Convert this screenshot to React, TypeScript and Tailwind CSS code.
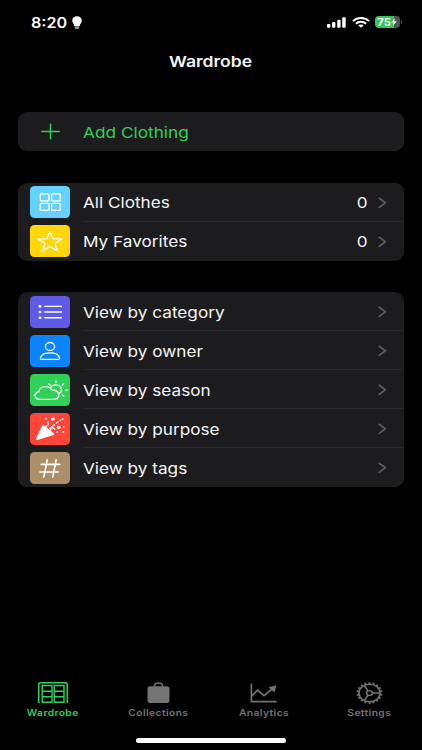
import type { ReactNode } from 'react'

interface RowProps {
  label: string
  tile: string
  icon: ReactNode
  count?: number
  last?: boolean
}

function Chevron() {
  return (
    <svg width="9" height="12" viewBox="0 0 9 12" fill="none" stroke="#5b5b5f" strokeWidth="1.7">
      <path d="M1.2 1.2 7.4 5.8 1.2 10.4" strokeLinecap="round" strokeLinejoin="round" />
    </svg>
  )
}

function Row({ label, tile, icon, count, last }: RowProps) {
  return (
    <div className="flex h-[39.05px] items-center pl-[12.5px]">
      <div className={`h-8 w-[39.5px] shrink-0 overflow-hidden rounded-[4.5px] ${tile}`}>
        <svg
          width="40"
          height="32"
          viewBox="0 0 40 32"
          fill="none"
          stroke="white"
          strokeWidth="1.3"
          strokeLinecap="round"
          strokeLinejoin="round"
        >
          {icon}
        </svg>
      </div>
      <div
        className={`ml-[13.2px] flex h-full flex-1 items-center border-b pt-[2px] pr-[17px] ${last ? 'border-transparent' : 'border-[#2a2a2c]'}`}
      >
        <span className="flex-1 pt-[1px]">
          <span className="inline-block origin-left scale-x-[1.145] whitespace-nowrap">{label}</span>
        </span>
        {count !== undefined && (
          <span className="mr-[10.5px] inline-block origin-right scale-x-[1.14] pt-[1px]">{count}</span>
        )}
        <Chevron />
      </div>
    </div>
  )
}

function Card({ children }: { children: ReactNode }) {
  return (
    <section className="overflow-hidden rounded-[9px] bg-[#1c1c1e] text-[15px] leading-5 text-[#f5f5f5]">
      {children}
    </section>
  )
}

const icons = {
  grid: (
    <>
      <rect x="10.2" y="7.9" width="8.8" height="7" rx="1" />
      <rect x="21.6" y="7.9" width="8.8" height="7" rx="1" />
      <rect x="10.2" y="17.3" width="8.8" height="7" rx="1" />
      <rect x="21.6" y="17.3" width="8.8" height="7" rx="1" />
    </>
  ),
  star: (
    <path d="M20 6.5 22.9 13.7 32.2 13.8 24.9 18.7 27.6 25.9 20 21.6 12.4 25.9 15.1 18.7 7.8 13.8 17.1 13.7Z" />
  ),
  list: (
    <>
      <path d="M14.8 10.4H31.4M14.8 16H31.4M14.8 21.7H31.4" strokeWidth="1.4" />
      <g fill="white" stroke="none">
        <ellipse cx="10" cy="10.4" rx="1.5" ry="1.3" />
        <ellipse cx="10" cy="16" rx="1.5" ry="1.3" />
        <ellipse cx="10" cy="21.7" rx="1.5" ry="1.3" />
      </g>
    </>
  ),
  person: (
    <>
      <ellipse cx="20" cy="11.5" rx="4.6" ry="4" />
      <path d="M12 24.4C10.6 24.4 10.2 23.7 10.5 22.7 11.4 19.7 15.2 17.8 20 17.8S28.6 19.7 29.5 22.7C29.8 23.7 29.4 24.4 28 24.4Z" />
    </>
  ),
  weather: (
    <>
      <path d="M10.4 25.4C7.1 25.4 5 23.9 5 21.6 5 19.6 6.6 18.1 8.8 17.8 9.1 14.7 12 12.6 15.6 12.6 18.6 12.6 20.8 14 22.1 16.2 25.2 15.6 28.7 17.6 28.7 20.7 28.7 23.5 26.5 25.4 23.4 25.4Z" />
      <path d="M20.4 14C21.2 12 23.4 10.8 25.9 10.8 29 10.8 31.5 13 31.5 15.7 31.5 17.5 30.4 18.9 28.6 19.8" />
      <path d="M26 7V8.6M18.7 9.7 20.1 11M33.8 9.6 32.2 11M35.6 16.1H37.5M32.4 21 33.8 22.3" />
    </>
  ),
  party: (
    <>
      <g fill="white" stroke="none">
        <path d="M6.1 25.5 12.4 12.1C12.7 11.4 13.5 11.6 14.1 12.2L23.8 20.3C24.6 21 24.4 21.7 23.5 22L7.4 27C6.4 27.3 5.7 26.5 6.1 25.5Z" />
        <ellipse cx="15.8" cy="5.8" rx="1.1" ry="1" />
        <ellipse cx="22.9" cy="6.1" rx="2" ry="1.7" />
        <circle cx="32.7" cy="5.8" r="0.9" />
        <ellipse cx="28.7" cy="14.3" rx="1.9" ry="1.6" />
        <circle cx="33.6" cy="14" r="0.9" />
        <circle cx="33.3" cy="19" r="1" />
        <circle cx="27.3" cy="19.1" r="1" />
        <circle cx="18.2" cy="8.7" r="0.8" />
      </g>
      <path d="M16.3 13.2C18.3 12.5 19.2 11 17.5 10.2M20.5 17.3C20.3 14.9 23 13.6 24.8 16.4" />
      <path d="M19.8 15.3 24.4 11.7M26.4 10.2 28.2 8.8M30 7.5 31 6.9" />
    </>
  ),
  hash: <path d="M17.3 7.7 13.8 25M26.2 7.7 22.7 25M11.2 12.4H29.8M9.9 20H28.3" strokeWidth="1.6" />,
}

const views = [
  { label: 'View by category', tile: 'bg-[#5e5ce6]', icon: icons.list },
  { label: 'View by owner', tile: 'bg-[#0a84ff]', icon: icons.person },
  { label: 'View by season', tile: 'bg-[#30d158]', icon: icons.weather },
  { label: 'View by purpose', tile: 'bg-[#ff453a]', icon: icons.party },
  { label: 'View by tags', tile: 'bg-[#ac8e68]', icon: icons.hash },
]

function StatusBar() {
  return (
    <div className="flex h-11 items-center justify-between pr-[20px] pl-[31px] text-white">
      <div className="flex items-center">
        <span className="inline-block w-[41px]">
          <span className="inline-block origin-left scale-x-[1.15] text-[14px] leading-5 font-semibold">8:20</span>
        </span>
        <svg width="10" height="14" viewBox="0 0 10 14" className="mt-px">
          <path d="M5 0.2C2.2 0.2 0.2 2 0.2 4.4 0.2 6.8 2 7.6 2.3 10H7.7C8 7.6 9.8 6.8 9.8 4.4 9.8 2 7.8 0.2 5 0.2Z" fill="white" />
          <path d="M2.7 10.2H7.3V11.6C7.3 12.6 6.4 13.2 5 13.2S2.7 12.6 2.7 11.6Z" fill="#9a9a9a" />
        </svg>
      </div>
      <div className="flex items-center">
        <svg width="19" height="11" viewBox="0 0 19 11" fill="white">
          <rect x="0" y="7" width="3.4" height="3.8" rx="1" />
          <rect x="5" y="5" width="3.4" height="5.8" rx="1" />
          <rect x="10.2" y="2.8" width="3.4" height="8" rx="1" />
          <rect x="15.2" y="0.2" width="3.5" height="10.6" rx="1" />
        </svg>
        <svg width="18" height="11" viewBox="0 0 18 11" className="ml-[5.5px]" fill="none" stroke="white" strokeWidth="2">
          <path d="M0.9 4.1C5.2 -0.1 12.8 -0.1 17.1 4.1" />
          <path d="M3.9 6.8C6.6 4.2 11.4 4.2 14.1 6.8" />
          <path d="M9 10.7 6.3 8.5C7.7 7.2 10.3 7.2 11.7 8.5Z" fill="white" stroke="none" />
        </svg>
        <div className="ml-[5.5px] flex items-center">
          <div className="flex h-3 w-[25px] items-center justify-center rounded-[4px] bg-linear-to-r from-[#34c759] from-76% to-[#555558] to-76%">
            <span className="inline-block scale-x-[1.12] text-[10px] leading-3 font-bold">75</span>
            <svg width="6" height="8" viewBox="0 0 6 8" className="ml-[1px]">
              <path d="M3.8 0.2 0.2 4.6H2.7L1.9 7.8 5.8 3.3H3.3Z" fill="white" />
            </svg>
          </div>
          <div className="ml-[0.8px] h-1 w-[1.2px] rounded-r-full bg-[#555558]" />
        </div>
      </div>
    </div>
  )
}

function WardrobeIcon() {
  return (
    <svg width="32" height="22" viewBox="0 0 32 22" fill="none" stroke="currentColor" strokeWidth="1.4">
      <path d="M1.7 21V2.5C1.7 1.3 2.4 0.8 3.5 0.8H28.5C29.6 0.8 30.3 1.3 30.3 2.5V21" strokeWidth="1.6" />
      <path d="M5.2 20.2V3.5H15V20.2ZM17.2 20.2V3.5H27V20.2ZM5.2 9.2H15M5.2 14.8H15M17.2 9.2H27M17.2 14.8H27" />
    </svg>
  )
}

function BagIcon() {
  return (
    <svg width="23" height="22" viewBox="0 0 23 22">
      <path d="M7.3 4.5C7.3 2.5 9 1 11.5 1S15.7 2.5 15.7 4.5" fill="none" stroke="currentColor" strokeWidth="1.4" />
      <rect x="0.5" y="4.3" width="22" height="16.7" rx="2.8" fill="currentColor" />
    </svg>
  )
}

function ChartIcon() {
  return (
    <svg width="27" height="22" viewBox="0 0 27 22" fill="none" stroke="currentColor" strokeWidth="1.6">
      <path d="M1.4 1.4V19.6H26.5" />
      <path d="M1.6 14 7.6 8.1 14 13.6 22.5 6.6" strokeWidth="1.7" />
      <path d="M26.4 3.3 24.4 10.4 18.7 5.2Z" fill="currentColor" stroke="none" />
    </svg>
  )
}

function GearIcon() {
  const teeth = Array.from({ length: 18 }, (_, i) => i * 20)
  return (
    <svg width="27" height="22" viewBox="-13.5 -11 27 22">
      <g transform="scale(1.2 1)" fill="none" stroke="currentColor" strokeWidth="1.4">
        <circle r="8.8" />
        {teeth.map((angle) => (
          <path key={angle} d="M0 -9V-10.8" strokeWidth="1.6" transform={`rotate(${angle})`} />
        ))}
        <circle r="2.4" />
        <path d="M2.4 0H8.8M-1.2 -2.1 -4.4 -7.6M-1.2 2.1 -4.4 7.6" />
      </g>
    </svg>
  )
}

const tabs = [
  { label: 'Wardrobe', icon: <WardrobeIcon />, active: true },
  { label: 'Collections', icon: <BagIcon /> },
  { label: 'Analytics', icon: <ChartIcon /> },
  { label: 'Settings', icon: <GearIcon /> },
]

export default function App() {
  return (
    <div className="flex h-[750px] w-[422px] flex-col overflow-hidden bg-black font-['Inter',sans-serif]">
      <StatusBar />
      <h1 className="flex h-9 items-center justify-center text-[15px] font-semibold text-[#f5f5f5]">
        <span className="inline-block scale-x-[1.17]">Wardrobe</span>
      </h1>

      <main className="flex flex-1 flex-col pt-8 pr-[18px] pl-[17.5px]">
        <Card>
          <button className="flex h-[39px] w-full items-center text-[#30d158]">
            <svg width="65" height="39" viewBox="0 0 65 39" stroke="currentColor" strokeWidth="1.5" strokeLinecap="round">
              <path d="M23.8 19.5H41.2M32.5 12.2V26.8" />
            </svg>
            <span className="inline-block origin-left scale-x-[1.15] pt-[2px]">Add Clothing</span>
          </button>
        </Card>

        <div className="mt-[31.5px]">
          <Card>
            <Row label="All Clothes" tile="bg-[#64d2ff]" icon={icons.grid} count={0} />
            <Row label="My Favorites" tile="bg-[#ffd60a]" icon={icons.star} count={0} last />
          </Card>
        </div>

        <div className="mt-[31.5px]">
          <Card>
            {views.map((view, i) => (
              <Row key={view.label} {...view} last={i === views.length - 1} />
            ))}
          </Card>
        </div>
      </main>

      <nav className="flex h-[68.5px] shrink-0">
        {tabs.map((tab) => (
          <button
            key={tab.label}
            className={`flex flex-1 flex-col items-center ${tab.active ? 'text-[#30d158]' : 'text-[#757575]'}`}
          >
            {tab.icon}
            <span className="mt-[3.5px] inline-block scale-x-[1.14] text-[9px] leading-3 font-semibold tracking-[0.35px]">
              {tab.label}
            </span>
          </button>
        ))}
      </nav>
      <div className="absolute top-[738px] left-[136px] h-[4.5px] w-[150px] rounded-full bg-white" />
    </div>
  )
}
